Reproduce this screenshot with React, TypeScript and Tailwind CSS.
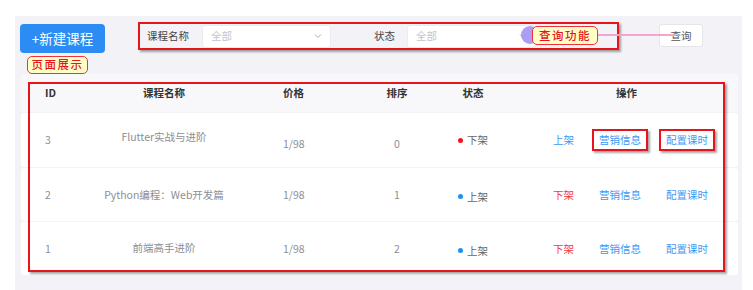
import React from 'react';

// Course list screen with review annotations (red boxes, yellow labels).
type Row = {
  id: string;
  name: string;
  price: string;
  sort: string;
  online: boolean;
  // small vertical nudges seen in the original cells
  nameShift: string;
  priceShift: string;
  statusShift: string;
  marked?: boolean;
};

const rows: Row[] = [
  { id: '3', name: 'Flutter实战与进阶', price: '1/98', sort: '0', online: false, nameShift: 'pb-[6px]', priceShift: 'pt-[8px]', statusShift: '', marked: true },
  { id: '2', name: 'Python编程：Web开发篇', price: '1/98', sort: '1', online: true, nameShift: '', priceShift: '', statusShift: 'pt-[4px]' },
  { id: '1', name: '前端高手进阶', price: '1/98', sort: '2', online: true, nameShift: 'pb-[2px]', priceShift: '', statusShift: 'pt-[4px]' },
];

const Chevron = () => (
  <svg width="10" height="10" viewBox="0 0 10 10" fill="none" className="shrink-0">
    <path d="M2 3.5 5 6.5 8 3.5" stroke="#a8abb2" strokeWidth="1" />
  </svg>
);

const Select = () => (
  <div className="w-[129px] h-[23px] bg-white rounded-[3px] border border-[#ececf0] flex items-center justify-between pl-[8px] pr-[7px]">
    <span className="text-[10.5px] text-[#c0c4cc]">全部</span>
    <Chevron />
  </div>
);

export default function App() {
  return (
    <div className="w-[753px] h-[290px] bg-white overflow-hidden pt-[16px] pl-[15px] font-['Noto_Sans_CJK_SC','Noto_Sans',sans-serif]">
      <div className="relative w-[727px] h-[274px] bg-[#f3f3f7]">
        {/* ── Toolbar ── */}
        <div className="flex items-start pt-[8px] pl-[5px]">
          <button type="button" className="w-[85px] h-[29px] rounded-[4px] bg-[#2d8cf4] text-white text-[13.5px] flex items-center justify-center">
            +新建课程
          </button>

          <div className="ml-[33px] -mt-[2px] w-[481px] h-[28px] border-2 border-[#e8141b] shadow-[2px_2px_2px_rgba(0,0,0,0.35)] flex items-center pl-[7px]">
            <span className="text-[10.5px] text-[#444]">课程名称</span>
            <div className="ml-[13px]"><Select /></div>
            <span className="ml-[43px] text-[10.5px] text-[#444]">状态</span>
            <div className="ml-[12px]"><Select /></div>
          </div>

          <button type="button" className="ml-[40px] w-[44px] h-[23px] bg-white border border-[#e6e6ea] rounded-[3px] text-[10.5px] text-[#555] flex items-center justify-center">
            查询
          </button>
        </div>

        {/* ── Table ── */}
        <div className="ml-[6px] mt-[21px] w-[717px] flex flex-col gap-[1px] text-[10.5px]">
          <div className="h-[38px] bg-[#f8f8fa] rounded-t-[3px] grid grid-cols-[79px_128px_122px_94px_58px_1fr] items-center font-bold text-[#333]">
            <div className="pl-[24px]">ID</div>
            <div className="text-center">课程名称</div>
            <div className="pl-[55px]">价格</div>
            <div className="text-center">排序</div>
            <div className="text-center">状态</div>
            <div className="pl-[114px]">操作</div>
          </div>

          {rows.map((r, i) => (
            <div
              key={r.id}
              className={`${i === 0 ? 'h-[54px]' : 'h-[53px]'} bg-white rounded-[3px] grid grid-cols-[79px_128px_122px_94px_58px_1fr] items-center text-[#8e8e93]`}
            >
              <div className="pl-[24px]">{r.id}</div>
              <div className={`text-center whitespace-nowrap ${r.nameShift}`}>{r.name}</div>
              <div className={`pl-[55px] ${r.priceShift}`}>{r.price}</div>
              <div className={`text-center ${r.priceShift}`}>{r.sort}</div>
              <div className={`flex items-center justify-center gap-[4px] text-[#666] ${r.statusShift}`}>
                <span className={`w-[5px] h-[5px] rounded-full ${r.online ? 'bg-[#1e8ff5]' : 'bg-[#f0141e]'}`} />
                {r.online ? '上架' : '下架'}
              </div>
              <div className="flex items-center pl-[45px] whitespace-nowrap">
                <span className={`border-2 border-transparent px-[4px] py-[1px] ${r.online ? 'text-[#f5393e]' : 'text-[#3a9af5]'}`}>
                  {r.online ? '下架' : '上架'}
                </span>
                <span className={`ml-[12px] border-2 px-[5px] py-[1px] text-[#3a9af5] ${r.marked ? 'border-[#e8141b] shadow-[2px_2px_2px_rgba(0,0,0,0.35)]' : 'border-transparent'}`}>
                  营销信息
                </span>
                <span className={`ml-[11px] border-2 px-[5px] py-[1px] text-[#3a9af5] ${r.marked ? 'border-[#e8141b] shadow-[2px_2px_2px_rgba(0,0,0,0.35)]' : 'border-transparent'}`}>
                  配置课时
                </span>
              </div>
            </div>
          ))}
        </div>

        {/* ── Annotations ── */}
        <div className="absolute left-[12px] top-[40px] w-[61px] h-[18px] rounded-[5px] border border-[#f0323a] bg-[#ffffc6] text-[#e8141b] text-[11.5px] font-medium tracking-[1.5px] flex items-center justify-center">
          页面展示
        </div>
        <div className="absolute left-[506px] top-[10px] w-[18px] h-[18px] rounded-full bg-[#9f8cf2]/85" />
        <div className="absolute left-[583px] top-[18px] w-[78px] h-[2px] bg-[#f5a3cf]" />
        <div className="absolute left-[517px] top-[10px] w-[66px] h-[19px] rounded-[5px] border border-[#f0323a] bg-[#ffffc6] text-[#e8141b] text-[11.5px] font-medium tracking-[1.5px] flex items-center justify-center">
          查询功能
        </div>
        <div className="absolute left-[13px] top-[66px] w-[697px] h-[190px] border-2 border-[#e8141b] shadow-[2px_2px_2px_rgba(0,0,0,0.35)] pointer-events-none" />
      </div>
    </div>
  );
}
